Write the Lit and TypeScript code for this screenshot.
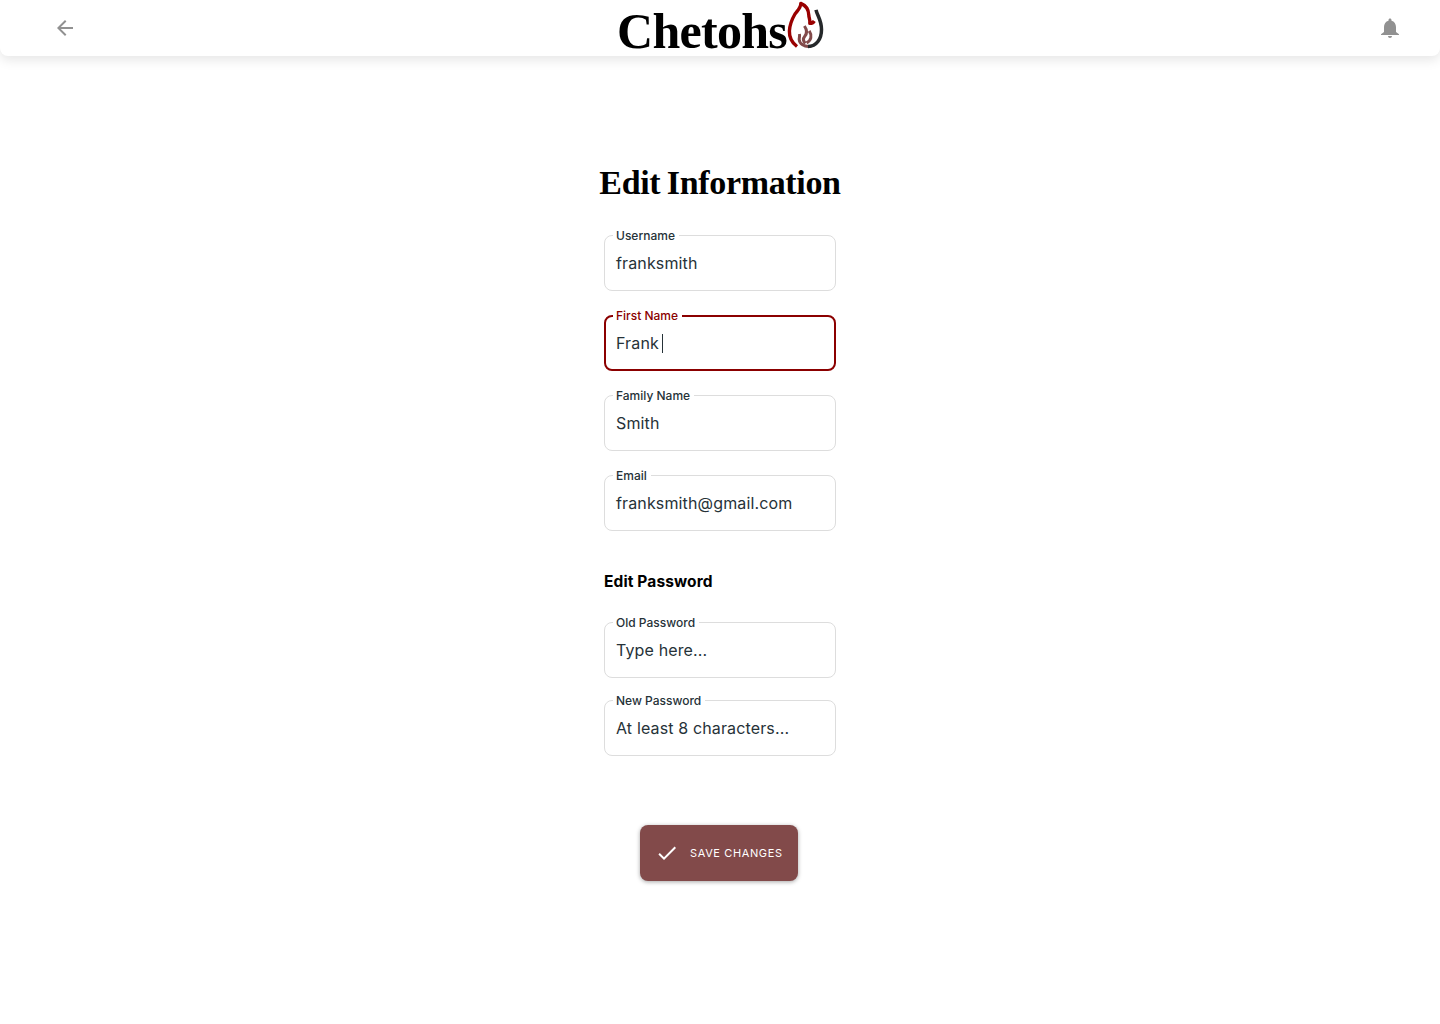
import { LitElement, html, css, svg } from "lit";
import { customElement, property, state } from "lit/decorators.js";
import { classMap } from "lit/directives/class-map.js";

interface Field {
  label: string;
  value: string;
  active?: boolean;
}

@customElement("text-field")
class TextField extends LitElement {
  @property() label = "";
  @property() value = "";
  @property({ type: Boolean }) active = false;

  static styles = css`
    :host {
      display: block;
      font-family: Inter, sans-serif;
    }
    .box {
      position: relative;
      box-sizing: border-box;
      display: flex;
      align-items: center;
      width: 232px;
      height: 56px;
      padding-left: 11px;
      border: 1px solid #dddddd;
      border-radius: 8px;
    }
    .box.active {
      border: 2px solid #8b0000;
      padding-left: 10px;
    }
    .label {
      position: absolute;
      left: 8px;
      top: -8px;
      padding: 0 4px 0 3px;
      background: #fff;
      color: #263238;
      font-size: 12px;
      line-height: 16px;
      font-weight: 500;
      letter-spacing: 0;
      white-space: nowrap;
    }
    .active .label {
      left: 7px;
      top: -9px;
      color: #8b0000;
    }
    .value {
      color: #263238;
      font-size: 16px;
      line-height: 24px;
      letter-spacing: 0.14px;
      white-space: nowrap;
    }
    .caret {
      width: 1px;
      height: 19px;
      margin-left: 2.6px;
      background: #263238;
    }
  `;

  render() {
    return html`<div class=${classMap({ box: true, active: this.active })}>
      <span class="label">${this.label}</span>
      <span class="value">${this.value}</span>
      ${this.active ? html`<span class="caret"></span>` : null}
    </div>`;
  }
}

const flame = svg`
  <path d="M31 46.2 C24 47.4 19.4 43.5 19.2 39.5 C19.1 37.5 20 36.5 19.4 34 M24.4 26 C26.8 29.5 27.6 33 24.8 36.2 C22.6 38.8 23 41 25.4 43.4 M29.2 30.8 C32.4 35.5 31.2 40.6 26.6 42.8" stroke="#824a4a" stroke-width="3" stroke-linejoin="round"/>
  <path d="M17 46.5 C11 42 9.2 37 9.4 31 C9.7 25 11.5 20 15 14 C18 10 21 7.5 20.8 3.4 C26 5.5 28.6 10.5 28.8 15 C28.8 18 30.4 19.5 29.8 23.4 C31.8 23.4 33.4 22.4 34.3 21" stroke="#990000" stroke-width="3.4" stroke-linejoin="round"/>
  <path d="M36 9.8 C37.2 15.5 41.5 20 41.5 29.5 C41.5 39 36.5 46.4 28 46.6" stroke="#25282a" stroke-width="3.5"/>
`;

@customElement("app-root")
class AppRoot extends LitElement {
  @state() private profile: Field[] = [
    { label: "Username", value: "franksmith" },
    { label: "First Name", value: "Frank", active: true },
    { label: "Family Name", value: "Smith" },
    { label: "Email", value: "franksmith@gmail.com" },
  ];
  @state() private passwords: Field[] = [
    { label: "Old Password", value: "Type here..." },
    { label: "New Password", value: "At least 8 characters..." },
  ];

  static styles = css`
    :host {
      display: block;
      min-height: 1024px;
      background: #fff;
    }
    svg {
      display: block;
      fill: none;
    }
    .bar {
      box-sizing: border-box;
      display: flex;
      justify-content: space-between;
      align-items: center;
      height: 56px;
      padding: 0 38px 0 53px;
      background: #fff;
      border-radius: 0 0 8px 8px;
      box-shadow: 0 4px 12px rgba(0, 0, 0, 0.1);
    }
    .icon {
      fill: #919191;
    }
    .brand {
      display: flex;
      height: 56px;
      padding-right: 12px;
    }
    .name {
      box-sizing: border-box;
      width: 171px;
      font: 700 50px/56px "Liberation Serif", serif;
      letter-spacing: -0.7px;
      padding-top: 3px;
      color: #000;
      white-space: nowrap;
    }
    .flame {
      margin-left: -8px;
    }
    main {
      display: flex;
      flex-direction: column;
      align-items: center;
      padding-top: 107px;
    }
    h1 {
      margin: 0;
      font: 700 34px/40px "Liberation Serif", serif;
      letter-spacing: -0.33px;
      word-spacing: -1.8px;
      color: #000;
    }
    .group {
      display: flex;
      flex-direction: column;
      gap: 24px;
      margin-top: 32px;
    }
    .group.secrets {
      gap: 22px;
      margin-top: 30px;
    }
    h2 {
      width: 232px;
      margin: 41px 0 0;
      font: 700 15.5px/20px Inter, sans-serif;
      letter-spacing: 0.12px;
      color: #000;
    }
    button {
      display: flex;
      align-items: center;
      box-sizing: border-box;
      width: 158px;
      height: 56px;
      margin: 69px 2px 0 0;
      padding: 0 0 0 15px;
      border: 0;
      border-radius: 8px;
      background: #824a4a;
      color: #fff;
      box-shadow: 0 1px 4px rgba(0, 0, 0, 0.35);
      font: 400 11px/16px Inter, sans-serif;
      letter-spacing: 0.62px;
      white-space: nowrap;
    }
    .check {
      fill: #fff;
      margin-right: 11px;
    }
  `;

  private fields(list: Field[]) {
    return list.map(
      (f) => html`<text-field .label=${f.label} .value=${f.value} ?active=${f.active ?? false}></text-field>`
    );
  }

  render() {
    return html`
      <header class="bar">
        <svg class="icon" width="24" height="24" viewBox="0 0 24 24">
          <path d="M20 11H7.83l5.59-5.59L12 4l-8 8 8 8 1.41-1.41L7.83 13H20v-2z" />
        </svg>
        <div class="brand">
          <span class="name">Chetohs</span>
          <svg class="flame" width="46" height="52" viewBox="0 0 46 52">${flame}</svg>
        </div>
        <svg class="icon" width="24" height="24" viewBox="0 0 24 24">
          <path d="M12 22c1.1 0 2-.9 2-2h-4c0 1.1.9 2 2 2zm6-6v-5c0-3.07-1.63-5.64-4.5-6.32V4c0-.83-.67-1.5-1.5-1.5s-1.5.67-1.5 1.5v.68C7.64 5.36 6 7.92 6 11v5l-3 2.2V19h18v-.8L18 16z" />
        </svg>
      </header>
      <main>
        <h1>Edit Information</h1>
        <section class="group">${this.fields(this.profile)}</section>
        <h2>Edit Password</h2>
        <section class="group secrets">${this.fields(this.passwords)}</section>
        <button>
          <svg class="check" width="24" height="24" viewBox="0 0 24 24">
            <path d="M9 16.17L4.83 12l-1.42 1.41L9 19 21 7l-1.41-1.41z" />
          </svg>
          SAVE CHANGES
        </button>
      </main>
    `;
  }
}
